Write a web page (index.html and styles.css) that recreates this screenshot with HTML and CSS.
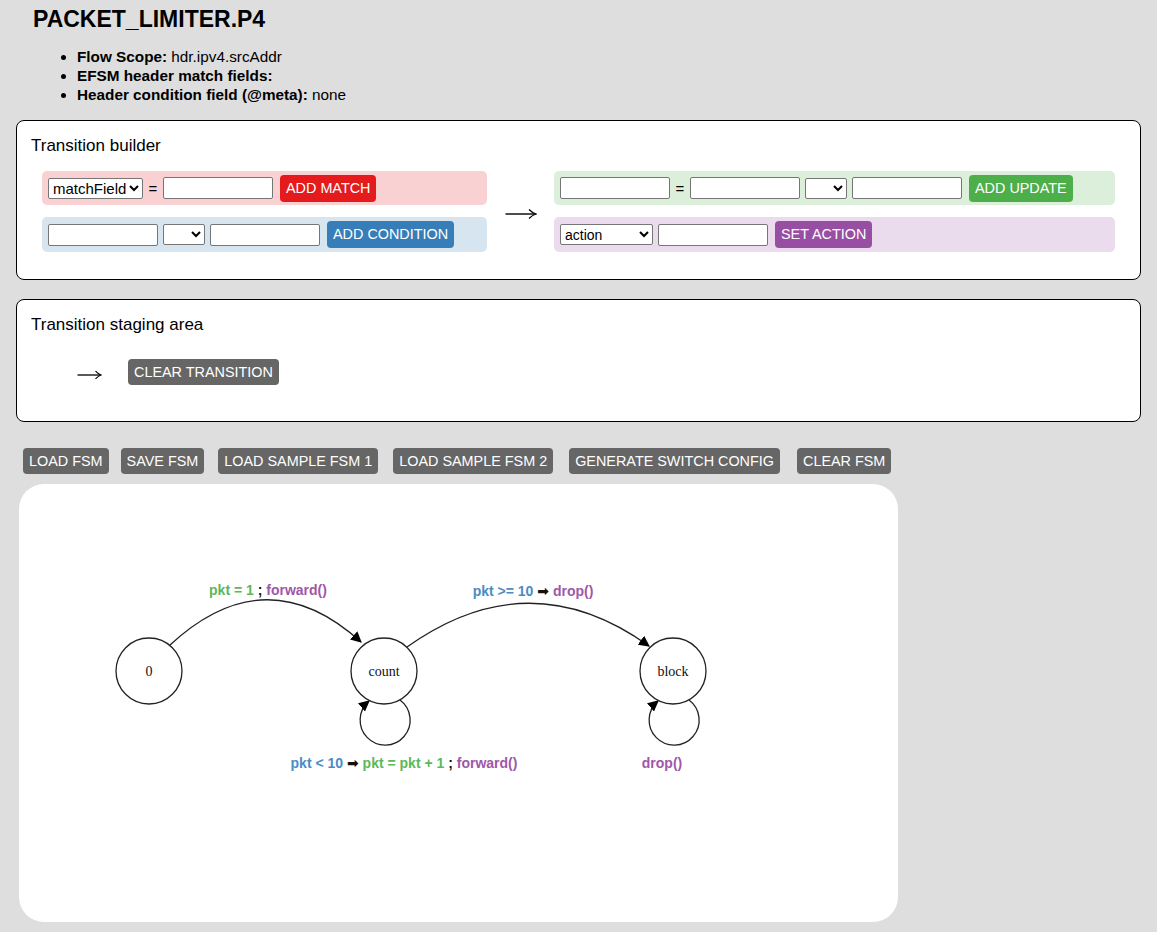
FILE: index.html
```html
<!DOCTYPE html>
<html>
<head>
<meta charset="utf-8">
<title>PACKET_LIMITER.P4</title>
<link rel="stylesheet" href="styles.css">
</head>
<body>
<div class="page">
  <h1 class="title">PACKET_LIMITER.P4</h1>
  <ul class="info">
    <li><b>Flow Scope:</b> hdr.ipv4.srcAddr</li>
    <li><b>EFSM header match fields:</b></li>
    <li><b>Header condition field (@meta):</b> none</li>
  </ul>

  <section class="panel builder">
    <div class="panel-title">Transition builder</div>
    <div class="builder-grid">
      <div class="col">
        <div class="row row-match">
          <select class="sel sel-match"><option>matchField</option></select>
          <span class="eq">=</span>
          <input class="inp" type="text">
          <button class="btn btn-red">ADD MATCH</button>
        </div>
        <div class="row row-cond">
          <input class="inp" type="text">
          <select class="sel sel-op"><option></option></select>
          <input class="inp" type="text">
          <button class="btn btn-blue">ADD CONDITION</button>
        </div>
      </div>
      <div class="arrow-col">
        <svg class="arrow-big" width="32" height="12" viewBox="0 0 32 12" xmlns="http://www.w3.org/2000/svg">
          <path d="M0.5,6 H30.5" stroke="#000" stroke-width="1.4" fill="none"/>
          <path d="M24,1.5 Q27.5,5 31,6 Q27.5,7 24,10.5" stroke="#000" stroke-width="1.3" fill="none"/>
        </svg>
      </div>
      <div class="col">
        <div class="row row-update">
          <input class="inp" type="text">
          <span class="eq">=</span>
          <input class="inp" type="text">
          <select class="sel sel-op"><option></option></select>
          <input class="inp" type="text">
          <button class="btn btn-green">ADD UPDATE</button>
        </div>
        <div class="row row-action">
          <select class="sel sel-action"><option>action</option></select>
          <input class="inp" type="text">
          <button class="btn btn-purple">SET ACTION</button>
        </div>
      </div>
    </div>
  </section>

  <section class="panel staging">
    <div class="panel-title">Transition staging area</div>
    <div class="staging-row">
      <svg class="arrow-small" width="25" height="10" viewBox="0 0 25 10" xmlns="http://www.w3.org/2000/svg">
        <path d="M0.5,5 H23.5" stroke="#000" stroke-width="1.3" fill="none"/>
        <path d="M18.5,1.2 Q21.5,4.2 24,5 Q21.5,5.8 18.5,8.8" stroke="#000" stroke-width="1.2" fill="none"/>
      </svg>
      <button class="btn btn-gray">CLEAR TRANSITION</button>
    </div>
  </section>

  <div class="toolbar">
    <button class="btn btn-gray">LOAD FSM</button>
    <button class="btn btn-gray m-12">SAVE FSM</button>
    <button class="btn btn-gray m-14">LOAD SAMPLE FSM 1</button>
    <button class="btn btn-gray m-15">LOAD SAMPLE FSM 2</button>
    <button class="btn btn-gray m-16">GENERATE SWITCH CONFIG</button>
    <button class="btn btn-gray m-17">CLEAR FSM</button>
  </div>

  <div class="canvas">
    <svg class="graph" width="879" height="438" viewBox="0 0 879 438" xmlns="http://www.w3.org/2000/svg">
      <defs>
        <marker id="ah" viewBox="0 0 10 10" refX="9" refY="5" markerWidth="11" markerHeight="11" markerUnits="userSpaceOnUse" orient="auto">
          <path d="M0,0 L10,5 L0,10 z" fill="#000"/>
        </marker>
      </defs>
      <g fill="none" stroke="#222" stroke-width="1.3">
        <path d="M151,161 Q247,72 342,158" marker-end="url(#ah)"/>
        <path d="M388,163 Q510,76 630,162" marker-end="url(#ah)"/>
        <path d="M381,216 A25,25 0 1,1 350,217" marker-end="url(#ah)"/>
        <path d="M670,216 A25,25 0 1,1 639,217" marker-end="url(#ah)"/>
        <circle cx="130" cy="187" r="33"/>
        <circle cx="365" cy="187" r="33"/>
        <circle cx="654" cy="187" r="33"/>
      </g>
      <g class="node-text" text-anchor="middle">
        <text x="130" y="192">0</text>
        <text x="365" y="192">count</text>
        <text x="654" y="192">block</text>
      </g>
      <g class="edge-text" text-anchor="middle">
        <text x="249" y="111"><tspan class="c-green">pkt = 1</tspan> <tspan class="c-black">;</tspan> <tspan class="c-purple">forward()</tspan></text>
        <text x="514" y="112"><tspan class="c-blue">pkt &gt;= 10</tspan> <tspan class="c-arrow">&#10145;</tspan> <tspan class="c-purple">drop()</tspan></text>
        <text x="385" y="284"><tspan class="c-blue">pkt &lt; 10</tspan> <tspan class="c-arrow">&#10145;</tspan> <tspan class="c-green">pkt = pkt + 1</tspan> <tspan class="c-black">;</tspan> <tspan class="c-purple">forward()</tspan></text>
        <text x="643" y="284"><tspan class="c-purple">drop()</tspan></text>
      </g>
    </svg>
  </div>
</div>
</body>
</html>
```

FILE: styles.css
```css
* { box-sizing: border-box; }

html, body {
  margin: 0;
  padding: 0;
  background: #dedede;
  font-family: "Liberation Sans", Arial, sans-serif;
  color: #000;
}

.page {
  padding: 0 16px 10px 16px;
}

.title {
  margin: 0;
  padding: 6px 0 0 17px;
  font-size: 23px;
  line-height: 26px;
  font-weight: bold;
}

.info {
  margin: 15px 0 16px 0;
  padding-left: 61px;
  font-size: 15.3px;
  line-height: 19px;
}

.panel {
  background: #fff;
  border: 1px solid #000;
  border-radius: 8px;
}

.panel-title {
  font-size: 17px;
  line-height: 20px;
}

.builder {
  padding: 15px 25px 27px 14px;
}

.builder-grid {
  display: grid;
  grid-template-columns: 445px 67px 1fr;
  margin-top: 15px;
  margin-left: 11px;
}

.col {
  display: flex;
  flex-direction: column;
  gap: 12px;
}

.row {
  display: flex;
  align-items: center;
  gap: 5px;
  height: 34px;
  padding: 0 6px;
  border-radius: 5px;
}

.row-match { background: #fad1d2; }
.row-cond { background: #d7e5f1; height: 35px; }
.row-update { background: #dbefdb; }
.row-action { background: #eadced; height: 35px; }

.eq {
  font-size: 15px;
  width: 10px;
  text-align: center;
}

.inp {
  width: 110px;
  height: 22px;
  border: 1px solid #767676;
  border-radius: 2px;
  background: #fff;
  padding: 1px 2px;
  font-size: 13px;
}

.sel {
  height: 21px;
  border: 1px solid #767676;
  border-radius: 2px;
  background: #fff;
  font-family: "Liberation Sans", Arial, sans-serif;
  color: #000;
}

.sel-match { width: 95px; font-size: 15px; }
.sel-op { width: 42px; font-size: 13px; }
.sel-action { width: 93px; font-size: 14px; }

.btn {
  font-family: "Liberation Sans", Arial, sans-serif;
  font-size: 14.4px;
  line-height: 17px;
  color: #fff;
  border: none;
  border-radius: 4px;
  padding: 5px 6px;
  cursor: pointer;
}

.row .btn { margin-left: 2px; }

.btn-red { background: #e41a1c; }
.btn-blue { background: #377eb8; }
.btn-green { background: #4daf4a; }
.btn-purple { background: #984ea3; }
.btn-gray { background: #666; padding: 4px 6px; height: 26px; }

.arrow-col {
  display: flex;
  align-items: center;
  justify-content: flex-start;
}

.arrow-big {
  display: block;
  margin-left: 18px;
  margin-top: 5px;
}

.staging {
  margin-top: 19px;
  padding: 15px 14px 36px 14px;
}

.staging-row {
  display: flex;
  align-items: flex-start;
  height: 26px;
  margin-top: 24px;
}

.arrow-small {
  display: block;
  margin: 11px 26px 0 46px;
}

.toolbar {
  display: flex;
  align-items: center;
  margin: 26px 0 10px 7px;
}

.m-12 { margin-left: 12px; }
.m-14 { margin-left: 14px; }
.m-15 { margin-left: 15px; }
.m-16 { margin-left: 16px; }
.m-17 { margin-left: 17px; }

.canvas {
  width: 879px;
  height: 438px;
  margin-left: 3px;
  background: #fff;
  border-radius: 25px;
  overflow: hidden;
}

.graph { display: block; }

.node-text text {
  font-family: "Liberation Serif", "Times New Roman", serif;
  font-size: 14px;
  fill: #111;
}

.edge-text text {
  font-family: "Liberation Sans", Arial, sans-serif;
  font-size: 14px;
  font-weight: bold;
}

.c-green { fill: #5cb85a; }
.c-blue { fill: #4a8cc6; }
.c-purple { fill: #9e57aa; }
.c-black { fill: #111; }
.c-arrow { fill: #111; font-family: "DejaVu Sans", sans-serif; font-size: 14px; }
```
